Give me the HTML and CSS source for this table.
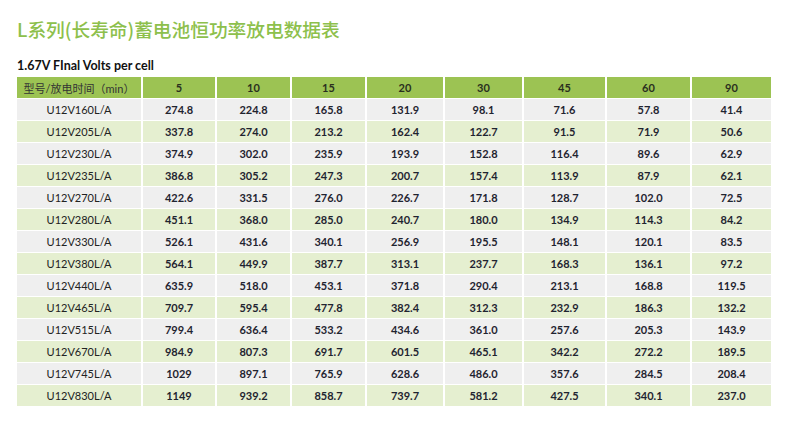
FILE: index.html
```html
<!DOCTYPE html>
<html lang="zh">
<head>
<meta charset="utf-8">
<link rel="stylesheet" href="styles.css">
</head>
<body>
<div class="page">
  <h1 class="title">L系列(长寿命)蓄电池恒功率放电数据表</h1>
  <h2 class="subtitle">1.67V FInal Volts per cell</h2>
  <table class="data">
    <colgroup>
      <col class="c0"><col class="c1"><col class="c2"><col class="c3"><col class="c4"><col class="c5"><col class="c6"><col class="c7"><col class="c8">
    </colgroup>
    <thead>
      <tr><th>型号/放电时间（min）</th><th>5</th><th>10</th><th>15</th><th>20</th><th>30</th><th>45</th><th>60</th><th>90</th></tr>
    </thead>
    <tbody>
      <tr><td>U12V160L/A</td><td>274.8</td><td>224.8</td><td>165.8</td><td>131.9</td><td>98.1</td><td>71.6</td><td>57.8</td><td>41.4</td></tr>
      <tr><td>U12V205L/A</td><td>337.8</td><td>274.0</td><td>213.2</td><td>162.4</td><td>122.7</td><td>91.5</td><td>71.9</td><td>50.6</td></tr>
      <tr><td>U12V230L/A</td><td>374.9</td><td>302.0</td><td>235.9</td><td>193.9</td><td>152.8</td><td>116.4</td><td>89.6</td><td>62.9</td></tr>
      <tr><td>U12V235L/A</td><td>386.8</td><td>305.2</td><td>247.3</td><td>200.7</td><td>157.4</td><td>113.9</td><td>87.9</td><td>62.1</td></tr>
      <tr><td>U12V270L/A</td><td>422.6</td><td>331.5</td><td>276.0</td><td>226.7</td><td>171.8</td><td>128.7</td><td>102.0</td><td>72.5</td></tr>
      <tr><td>U12V280L/A</td><td>451.1</td><td>368.0</td><td>285.0</td><td>240.7</td><td>180.0</td><td>134.9</td><td>114.3</td><td>84.2</td></tr>
      <tr><td>U12V330L/A</td><td>526.1</td><td>431.6</td><td>340.1</td><td>256.9</td><td>195.5</td><td>148.1</td><td>120.1</td><td>83.5</td></tr>
      <tr><td>U12V380L/A</td><td>564.1</td><td>449.9</td><td>387.7</td><td>313.1</td><td>237.7</td><td>168.3</td><td>136.1</td><td>97.2</td></tr>
      <tr><td>U12V440L/A</td><td>635.9</td><td>518.0</td><td>453.1</td><td>371.8</td><td>290.4</td><td>213.1</td><td>168.8</td><td>119.5</td></tr>
      <tr><td>U12V465L/A</td><td>709.7</td><td>595.4</td><td>477.8</td><td>382.4</td><td>312.3</td><td>232.9</td><td>186.3</td><td>132.2</td></tr>
      <tr><td>U12V515L/A</td><td>799.4</td><td>636.4</td><td>533.2</td><td>434.6</td><td>361.0</td><td>257.6</td><td>205.3</td><td>143.9</td></tr>
      <tr><td>U12V670L/A</td><td>984.9</td><td>807.3</td><td>691.7</td><td>601.5</td><td>465.1</td><td>342.2</td><td>272.2</td><td>189.5</td></tr>
      <tr><td>U12V745L/A</td><td>1029</td><td>897.1</td><td>765.9</td><td>628.6</td><td>486.0</td><td>357.6</td><td>284.5</td><td>208.4</td></tr>
      <tr><td>U12V830L/A</td><td>1149</td><td>939.2</td><td>858.7</td><td>739.7</td><td>581.2</td><td>427.5</td><td>340.1</td><td>237.0</td></tr>
    </tbody>
  </table>
</div>
</body>
</html>
```

FILE: styles.css
```css
html, body {
  margin: 0;
  padding: 0;
  background: #ffffff;
}
.page {
  padding: 15px 19px 0 17px;
  font-family: Lato, "Noto Sans CJK SC", sans-serif;
  color: #222;
}
.title {
  margin: 0;
  font-family: "Noto Sans CJK SC", sans-serif;
  font-weight: 500;
  font-size: 18.7px;
  line-height: 28px;
  color: #8dc04c;
}
.subtitle {
  margin: 15px 0 3px;
  font-family: Lato, sans-serif;
  font-weight: 700;
  font-size: 12.5px;
  line-height: 16px;
  color: #111;
}
.data {
  width: 754px;
  border-collapse: collapse;
  table-layout: fixed;
  font-size: 11px;
}
.c0 { width: 125px; }
.c1 { width: 74px; }
.c2 { width: 75px; }
.c3 { width: 75px; }
.c4 { width: 78px; }
.c5 { width: 79px; }
.c6 { width: 83px; }
.c7 { width: 85px; }
.c8 { width: 80px; }
.data th, .data td {
  height: 21px;
  padding: 0;
  text-align: center;
  border-left: 2px solid #fff;
  border-right: 2px solid #fff;
  border-bottom: 1px solid #fff;
}
.data th:first-child, .data td:first-child { border-left: 0; }
.data th:last-child, .data td:last-child { border-right: 0; }
.data th {
  background: #9cc353;
  color: #2a2f1e;
  font-weight: 700;
  font-family: Lato, "Noto Sans CJK SC", sans-serif;
}
.data thead th:first-child {
  font-weight: 400;
  color: #333;
}
.data td {
  font-weight: 700;
  color: #1f2430;
}
.data td:first-child {
  font-weight: 400;
  color: #222;
}
.data tbody tr:nth-child(odd) td { background: #efefef; }
.data tbody tr:nth-child(even) td { background: #e5efd0; }
```
